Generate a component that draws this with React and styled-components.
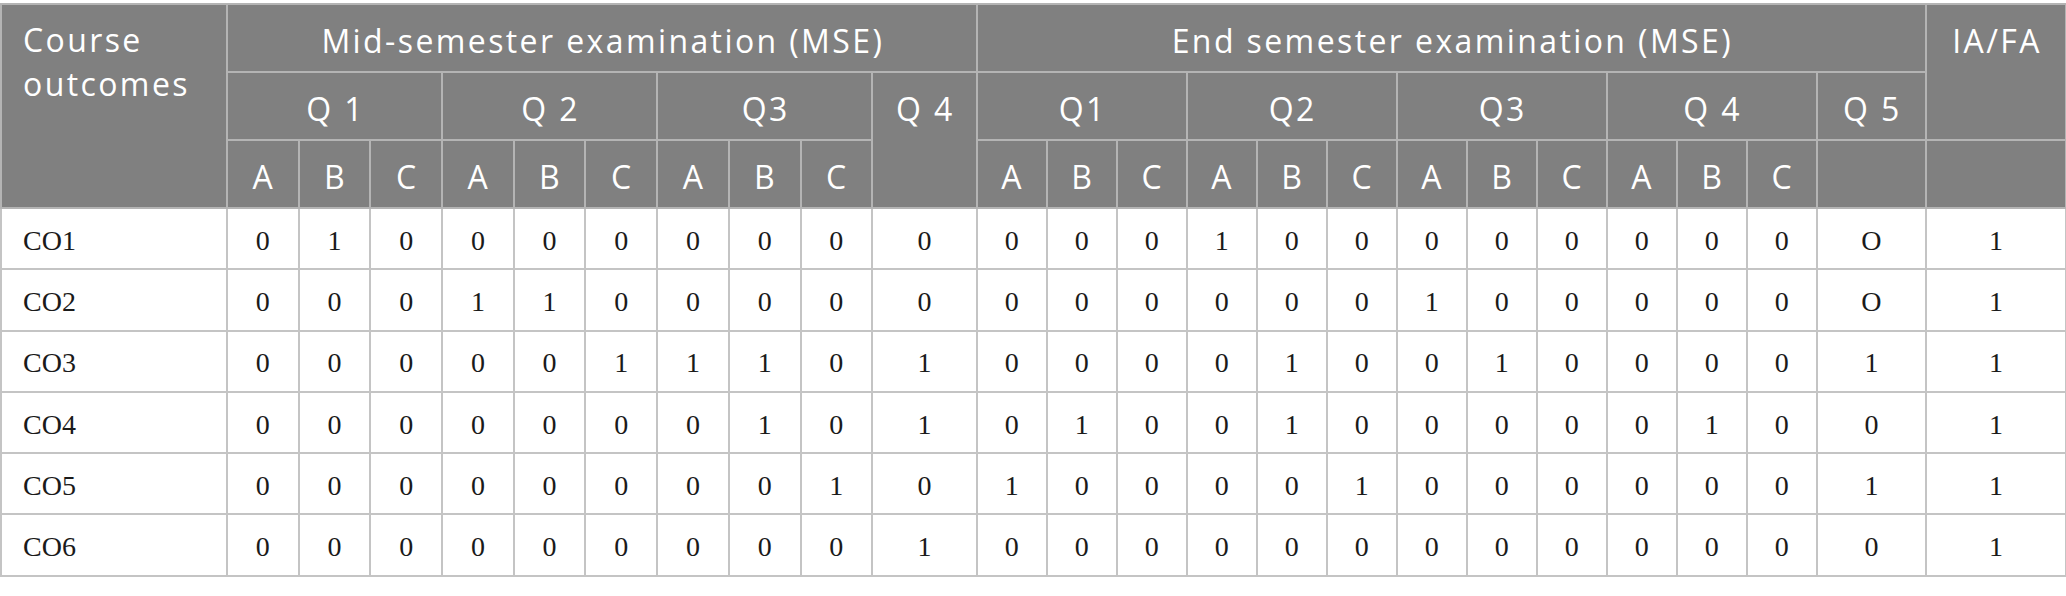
import React from "react";
import styled, { createGlobalStyle } from "styled-components";

const GlobalStyle = createGlobalStyle`
  html, body {
    margin: 0;
    padding: 0;
    background: #fff;
  }
`;

const midCols = ["Q 1", "Q 2", "Q3"];
const endCols = ["Q1", "Q2", "Q3", "Q 4"];
const parts = ["A", "B", "C"];

const rows = [
  { co: "CO1", mid: [0, 1, 0, 0, 0, 0, 0, 0, 0], q4: 0, end: [0, 0, 0, 1, 0, 0, 0, 0, 0, 0, 0, 0], q5: "O", ia: 1 },
  { co: "CO2", mid: [0, 0, 0, 1, 1, 0, 0, 0, 0], q4: 0, end: [0, 0, 0, 0, 0, 0, 1, 0, 0, 0, 0, 0], q5: "O", ia: 1 },
  { co: "CO3", mid: [0, 0, 0, 0, 0, 1, 1, 1, 0], q4: 1, end: [0, 0, 0, 0, 1, 0, 0, 1, 0, 0, 0, 0], q5: 1, ia: 1 },
  { co: "CO4", mid: [0, 0, 0, 0, 0, 0, 0, 1, 0], q4: 1, end: [0, 1, 0, 0, 1, 0, 0, 0, 0, 0, 1, 0], q5: 0, ia: 1 },
  { co: "CO5", mid: [0, 0, 0, 0, 0, 0, 0, 0, 1], q4: 0, end: [1, 0, 0, 0, 0, 1, 0, 0, 0, 0, 0, 0], q5: 1, ia: 1 },
  { co: "CO6", mid: [0, 0, 0, 0, 0, 0, 0, 0, 0], q4: 1, end: [0, 0, 0, 0, 0, 0, 0, 0, 0, 0, 0, 0], q5: 0, ia: 1 },
];

const App = () => {
  return (
    <>
      <GlobalStyle />
      <Wrapper>
        <Table>
          <colgroup>
            <col style={{ width: 226 }} />
            {Array.from({ length: 9 }).map((_, i) => (
              <col key={"m" + i} style={{ width: 71.7 }} />
            ))}
            <col style={{ width: 104.4 }} />
            {Array.from({ length: 12 }).map((_, i) => (
              <col key={"e" + i} style={{ width: 70 }} />
            ))}
            <col style={{ width: 109.3 }} />
            <col style={{ width: 140 }} />
          </colgroup>
          <thead>
            <HeadRow>
              <HeadCell rowSpan={3} $left>
                Course
                <br />
                outcomes
              </HeadCell>
              <HeadCell colSpan={10}>Mid-semester examination (MSE)</HeadCell>
              <HeadCell colSpan={13}>End semester examination (MSE)</HeadCell>
              <HeadCell rowSpan={2}>IA/FA</HeadCell>
            </HeadRow>
            <HeadRow>
              {midCols.map((q) => (
                <HeadCell key={q} colSpan={3}>
                  {q}
                </HeadCell>
              ))}
              <HeadCell rowSpan={2}>Q 4</HeadCell>
              {endCols.map((q) => (
                <HeadCell key={q} colSpan={3}>
                  {q}
                </HeadCell>
              ))}
              <HeadCell>Q 5</HeadCell>
            </HeadRow>
            <HeadRow>
              {midCols.map((q) =>
                parts.map((p) => <HeadCell key={q + p}>{p}</HeadCell>)
              )}
              {endCols.map((q) =>
                parts.map((p) => <HeadCell key={q + p}>{p}</HeadCell>)
              )}
              <HeadCell />
              <HeadCell />
            </HeadRow>
          </thead>
          <tbody>
            {rows.map((r) => (
              <BodyRow key={r.co}>
                <Cell $left>{r.co}</Cell>
                {r.mid.map((v, i) => (
                  <Cell key={"m" + i}>{v}</Cell>
                ))}
                <Cell>{r.q4}</Cell>
                {r.end.map((v, i) => (
                  <Cell key={"e" + i}>{v}</Cell>
                ))}
                <Cell>{r.q5}</Cell>
                <Cell>{r.ia}</Cell>
              </BodyRow>
            ))}
          </tbody>
        </Table>
      </Wrapper>
    </>
  );
};

const Wrapper = styled.div`
  padding-top: 3px;
  width: 2066px;
`;

const Table = styled.table`
  width: 2066px;
  table-layout: fixed;
  border-collapse: collapse;
  border: 2px solid #bdbdbd;
`;

const HeadRow = styled.tr`
  height: 68px;
`;

const HeadCell = styled.th`
  background-color: #808080;
  color: #fff;
  font-family: "Open Sans", "DejaVu Sans", sans-serif;
  font-weight: 400;
  font-size: 32px;
  letter-spacing: 2.4px;
  line-height: ${(p) => (p.$left ? "44px" : "37px")};
  text-align: ${(p) => (p.$left ? "left" : "center")};
  vertical-align: top;
  padding: ${(p) => (p.$left ? "13px 0 0 21px" : "17px 0 0 2px")};
  border: 2px solid #b4b4b4;
  white-space: nowrap;
`;

const BodyRow = styled.tr`
  height: 61.3px;
`;

const Cell = styled.td`
  background-color: #fff;
  color: #1a1a1a;
  font-family: "Liberation Serif", "Times New Roman", serif;
  font-size: 28px;
  text-align: ${(p) => (p.$left ? "left" : "center")};
  vertical-align: middle;
  padding: 4px 0 0 ${(p) => (p.$left ? "21px" : "0")};
  border: 2px solid #c4c4c4;
`;

export default App;
